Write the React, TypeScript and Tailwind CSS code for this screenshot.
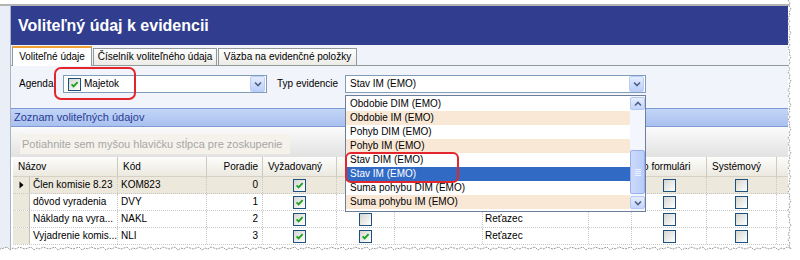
import React from 'react'

type Row = {
  name: string
  code: string
  order: number
  req: boolean
  uniq: boolean
  type: string
  form: boolean
  sys: boolean
  current?: boolean
}

// rows 1-2 lie under the open list, so their hidden cells stay empty
const ROWS: Row[] = [
  { name: 'Člen komisie 8.23', code: 'KOM823', order: 0, req: true, uniq: false, type: '', form: false, sys: false, current: true },
  { name: 'dôvod vyradenia', code: 'DVY', order: 1, req: true, uniq: false, type: '', form: false, sys: false },
  { name: 'Náklady na vyra...', code: 'NAKL', order: 2, req: true, uniq: false, type: 'Reťazec', form: false, sys: false },
  { name: 'Vyjadrenie komis...', code: 'NLI', order: 3, req: true, uniq: true, type: 'Reťazec', form: false, sys: false },
]

const TYPES = [
  'Obdobie DIM (EMO)',
  'Obdobie IM (EMO)',
  'Pohyb DIM (EMO)',
  'Pohyb IM (EMO)',
  'Stav DIM (EMO)',
  'Stav IM (EMO)',
  'Suma pohybu DIM (EMO)',
  'Suma pohybu IM (EMO)',
]

function CheckBox({ checked }: { checked?: boolean }) {
  return (
    <span className="inline-flex h-[13px] w-[13px] items-center justify-center border border-[#1c5180] bg-linear-to-br from-[#d6d6d0] to-white">
      {checked && (
        <svg width="9" height="9" viewBox="0 0 9 9">
          <path d="M1.6 4.4 L3.6 6.4 L7.6 2.2" fill="none" stroke="#21a121" strokeWidth="1.9" />
        </svg>
      )}
    </span>
  )
}

function Chevron({ up }: { up?: boolean }) {
  return (
    <svg width="8" height="6" viewBox="0 0 8 6">
      <path d={up ? 'M1 4.5 L4 1.5 L7 4.5' : 'M1 1.5 L4 4.5 L7 1.5'} fill="none" stroke="#4d6185" strokeWidth="1.6" />
    </svg>
  )
}

function ComboArrow() {
  return (
    <span className="flex h-[16px] w-[15px] items-center justify-center rounded-[2px] border border-[#b9cdf7] bg-linear-to-b from-[#e4ecfd] to-[#bccff9]">
      <Chevron />
    </span>
  )
}

// jagged "torn paper" edge of the screenshot
const RIGHT = Array.from({ length: 84 }, (_, i) => [788 + [0, 2, 1, 3, 1, 2, 0, 2][i % 8], i * 3])
const BOTTOM = Array.from({ length: 265 }, (_, i) => [790 - i * 3, 247 + [1, 0, 2, 1, 3, 0, 1, 2][i % 8]])
const EDGE = [...RIGHT, ...BOTTOM].map(p => p.join(',')).join(' ')

export default function App() {
  return (
    <div className="relative h-[260px] w-[800px] overflow-hidden bg-white font-['Liberation_Sans',Arial,sans-serif] text-[10px] leading-none text-black">
      <div className="h-[4px]" />
      <div className="h-[2px] bg-[#b4b4b4]" />
      <div className="flex h-[254px]">
        {/* left frame strip */}
        <div className="w-[11px] border-r border-[#aab3c4] bg-[#e9eef7]" />

        <div className="flex w-[777px] flex-col">
          {/* Title */}
          <div className="flex h-[39px] items-center bg-[#313e8f] pl-[7px] text-[16px] font-bold text-white">
            Voliteľný údaj k evidencii
          </div>

          {/* Tabs */}
          <div className="flex h-[21px] items-end border-b border-[#919b9c] bg-[#f0f4fa] pl-[1px]">
            <div className="-mb-px flex h-[20px] w-[80px] items-center justify-center border-x border-t-2 border-x-[#919b9c] border-t-[#f0a030] bg-white">
              Voliteľné údaje
            </div>
            <div className="ml-px flex h-[17px] w-[124px] items-center justify-center border-x border-t border-[#919b9c] bg-linear-to-b from-white to-[#ecebe6]">
              Číselník voliteľného údaja
            </div>
            <div className="ml-px flex h-[17px] w-[139px] items-center justify-center border-x border-t border-[#919b9c] bg-linear-to-b from-white to-[#ecebe6]">
              Väzba na evidenčné položky
            </div>
          </div>

          {/* Filter */}
          <div className="flex h-[42px] items-center bg-[#f1f5fb] pl-[8px] pb-[6px]">
            <div className="w-[44px]">Agenda</div>
            <div className="flex h-[18px] w-[204px] items-center border border-[#7f9db9] bg-white pl-[4px] pr-px">
              <CheckBox checked />
              <span className="ml-[3px] flex-1">Majetok</span>
              <ComboArrow />
            </div>
            <div className="ml-[10px] w-[68px]">Typ evidencie</div>
            <div className="flex h-[18px] w-[301px] items-center border border-[#7f9db9] bg-white pl-[4px] pr-px">
              <span className="flex-1">Stav IM (EMO)</span>
              <ComboArrow />
            </div>
          </div>

          {/* Group header */}
          <div className="flex h-[19px] items-center border-y border-[#7e9ad6] bg-linear-to-b from-[#c3d5f7] to-[#a9c1ef] pl-[3px] text-[11px] text-[#283c94]">
            Zoznam voliteľných údajov
          </div>

          {/* Group-by area */}
          <div className="h-[30px] bg-linear-to-b from-[#fbfbfb] to-[#e2e2e2] pl-[9px] pt-[7px]">
            <div className="flex h-[20px] w-[270px] items-center bg-[#f5f2eb] pl-[2px] text-[11px] text-[#a6a6a6]">
              Potiahnite sem myšou hlavičku stĺpca pre zoskupenie
            </div>
          </div>

          {/* Grid */}
          <div className="flex-1 bg-white pl-[2px]">
            <div className="flex h-[20px] border-b border-[#d5d2c5] bg-linear-to-b from-[#fdfdfc] to-[#ebe9df]">
              <div className="flex w-[105px] items-center border-r border-[#cfcbbc] pl-[5px]">Názov</div>
              <div className="flex w-[89px] items-center border-r border-[#cfcbbc] pl-[5px]">Kód</div>
              <div className="flex w-[56px] items-center justify-end border-r border-[#cfcbbc] pr-[4px]">Poradie</div>
              <div className="flex w-[74px] items-center border-r border-[#cfcbbc] pl-[5px]">Vyžadovaný</div>
              <div className="w-[58px] border-r border-[#cfcbbc]" />
              <div className="w-[88px] border-r border-[#cfcbbc]" />
              <div className="w-[106px] border-r border-[#cfcbbc]" />
              <div className="w-[43px] border-r border-[#cfcbbc]" />
              <div className="flex w-[75px] items-center border-r border-[#cfcbbc] pl-[5px]">Vo formulári</div>
              <div className="flex w-[70px] items-center border-r border-[#cfcbbc] pl-[5px]">Systémový</div>
            </div>

            {ROWS.map(r => (
              <div
                key={r.code}
                className={`flex h-[17px] border-b border-dotted border-[#c8c8c8] ${r.current ? 'bg-[#ece9dc]' : 'bg-white'}`}
              >
                <div className="flex w-[17px] items-center justify-center border-r border-[#c5c2b2] bg-[#ebe8dc]">
                  {r.current && (
                    <svg width="5" height="8" viewBox="0 0 5 8">
                      <path d="M0.5 0.5 L4.5 4 L0.5 7.5 Z" fill="#000" />
                    </svg>
                  )}
                </div>
                <div className="flex w-[88px] items-center overflow-hidden whitespace-nowrap border-r border-dotted border-[#c8c8c8] pl-[3px]">{r.name}</div>
                <div className="flex w-[89px] items-center border-r border-dotted border-[#c8c8c8] pl-[3px]">{r.code}</div>
                <div className="flex w-[56px] items-center justify-end border-r border-dotted border-[#c8c8c8] pr-[4px]">{r.order}</div>
                <div className="flex w-[74px] items-center justify-center border-r border-dotted border-[#c8c8c8]"><CheckBox checked={r.req} /></div>
                <div className="flex w-[58px] items-center justify-center border-r border-dotted border-[#c8c8c8]"><CheckBox checked={r.uniq} /></div>
                <div className="w-[88px] border-r border-dotted border-[#c8c8c8]" />
                <div className="flex w-[106px] items-center border-r border-dotted border-[#c8c8c8] pl-[2px]">{r.type}</div>
                <div className="w-[43px] border-r border-dotted border-[#c8c8c8]" />
                <div className="flex w-[75px] items-center justify-center border-r border-dotted border-[#c8c8c8]"><CheckBox checked={r.form} /></div>
                <div className="flex w-[70px] items-center justify-center border-r border-dotted border-[#c8c8c8]"><CheckBox checked={r.sys} /></div>
              </div>
            ))}
          </div>
        </div>
      </div>

      {/* Open dropdown list of "Typ evidencie" */}
      <div className="absolute left-[345px] top-[95px] flex h-[117px] w-[301px] border border-[#6f7f99] bg-white">
        <div className="flex w-[284px] flex-col pt-px">
          {TYPES.map((t, i) => (
            <div
              key={t}
              className={`flex h-[14px] items-center pl-[4px] ${
                t === 'Stav IM (EMO)' ? 'bg-[#316ac5] text-white' : i % 2 ? 'bg-[#f9e8d6]' : 'bg-white'
              }`}
            >
              {t}
            </div>
          ))}
        </div>
        <div className="flex w-[15px] flex-col bg-[#f3f6fc] pt-px">
          <div className="flex h-[13px] items-center justify-center rounded-[2px] border border-[#b4c8f6] bg-linear-to-b from-[#e6edfd] to-[#c3d4fb]">
            <Chevron up />
          </div>
          <div className="mt-[40px] flex h-[44px] flex-col items-center justify-center gap-px rounded-[2px] border border-[#98b1ee] bg-linear-to-r from-[#cddbfc] to-[#b7ccf9]">
            <span className="h-px w-[6px] bg-[#eef3fe]" />
            <span className="h-px w-[6px] bg-[#eef3fe]" />
            <span className="h-px w-[6px] bg-[#eef3fe]" />
            <span className="h-px w-[6px] bg-[#eef3fe]" />
          </div>
          <div className="mt-[2px] flex h-[13px] items-center justify-center rounded-[2px] border border-[#b4c8f6] bg-linear-to-b from-[#e6edfd] to-[#c3d4fb]">
            <Chevron />
          </div>
        </div>
      </div>

      {/* red highlights */}
      <div className="absolute left-[54px] top-[67px] h-[33px] w-[82px] rounded-[7px] border-2 border-[#e2262c]" />
      <div className="absolute left-[345px] top-[152px] h-[31px] w-[114px] rounded-[6px] border-2 border-[#e2262c]" />

      {/* torn edge */}
      <svg className="pointer-events-none absolute left-0 top-0" width="800" height="260">
        <polygon points={`${EDGE} 0,260 800,260 800,0`} fill="#fff" />
        <polyline points={EDGE} fill="none" stroke="#9a9a9a" strokeWidth="1" strokeDasharray="2 1" />
      </svg>
    </div>
  )
}
